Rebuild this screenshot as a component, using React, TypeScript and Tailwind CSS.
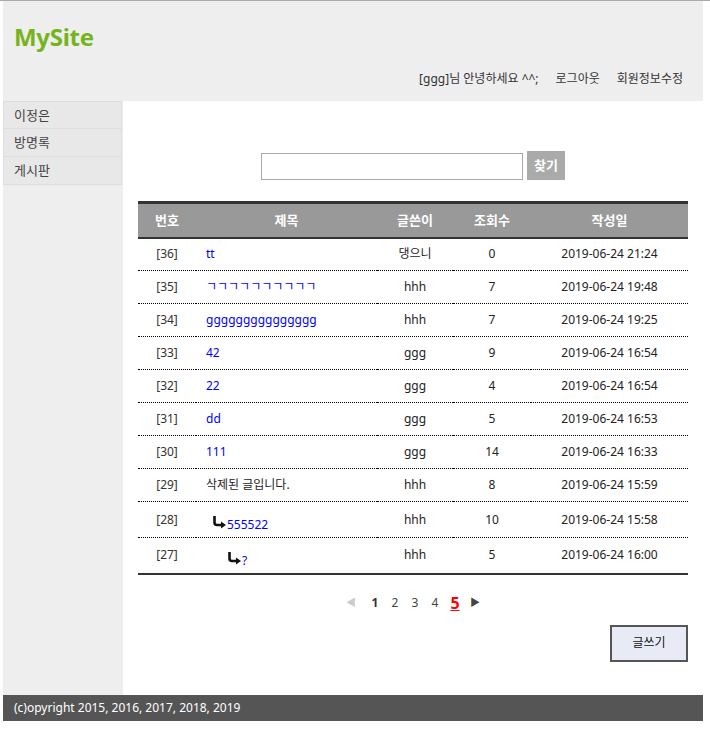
import React from 'react';

type Row = {
  no: number;
  title: string;
  depth: number;
  deleted?: boolean;
  writer: string;
  hit: number;
  date: string;
};

const rows: Row[] = [
  { no: 36, title: 'tt', depth: 0, writer: '댕으니', hit: 0, date: '2019-06-24 21:24' },
  { no: 35, title: 'ㄱㄱㄱㄱㄱㄱㄱㄱㄱㄱ', depth: 0, writer: 'hhh', hit: 7, date: '2019-06-24 19:48' },
  { no: 34, title: 'ggggggggggggggg', depth: 0, writer: 'hhh', hit: 7, date: '2019-06-24 19:25' },
  { no: 33, title: '42', depth: 0, writer: 'ggg', hit: 9, date: '2019-06-24 16:54' },
  { no: 32, title: '22', depth: 0, writer: 'ggg', hit: 4, date: '2019-06-24 16:54' },
  { no: 31, title: 'dd', depth: 0, writer: 'ggg', hit: 5, date: '2019-06-24 16:53' },
  { no: 30, title: '111', depth: 0, writer: 'ggg', hit: 14, date: '2019-06-24 16:33' },
  { no: 29, title: '삭제된 글입니다.', depth: 0, deleted: true, writer: 'hhh', hit: 8, date: '2019-06-24 15:59' },
  { no: 28, title: '555522', depth: 1, writer: 'hhh', hit: 10, date: '2019-06-24 15:58' },
  { no: 27, title: '?', depth: 2, writer: 'hhh', hit: 5, date: '2019-06-24 16:00' },
];

const ReplyArrow = () => (
  <svg width="15" height="14" viewBox="0 0 15 14" className="inline-block shrink-0">
    <path d="M2.5 1 V7.5 Q2.5 10 5 10 H10" fill="none" stroke="#111" strokeWidth="2.6" />
    <polygon points="9,6.5 14,10 9,13.5" fill="#111" />
  </svg>
);

const menus = ['이정은', '방명록', '게시판'];

export default function App() {
  return (
    <div className="min-h-[730px] bg-white border-t border-[#aaa] font-['Noto_Sans','Noto_Sans_CJK_KR',sans-serif] text-[12px] text-[#333]">
      <div className="ml-[3px] w-[700px]">
        {/* header */}
        <div className="h-[100px] bg-[#eeeeee] flex flex-col justify-between">
          <h1 className="pl-[11px] pt-[19px] text-[24px] leading-[34px] font-bold text-[#76b41d] tracking-[-0.3px]">MySite</h1>
          <div className="flex justify-end gap-[17px] pr-[20px] pb-[14px] leading-[16px] text-[12px] text-[#333]">
            <span>[ggg]님 안녕하세요 ^^;</span>
            <span>로그아웃</span>
            <span>회원정보수정</span>
          </div>
        </div>

        <div className="flex">
          {/* sidebar */}
          <div className="w-[120px] bg-[#eeeeee] shrink-0">
            <ul>
              {menus.map((m, i) => (
                <li
                  key={m}
                  className={`h-[28px] w-[119px] border border-[#dddddd] bg-[#e8e8e8] pl-[10px] text-[13px] leading-[26px] text-[#444] ${i > 0 ? 'border-t-0' : ''}`}
                >
                  {m}
                </li>
              ))}
            </ul>
          </div>

          {/* content */}
          <div className="flex-1 pl-[15px] pr-[15px] pt-[50px] pb-[33px]">
            <div className="flex items-end justify-center gap-[4px]">
              <input type="text" className="w-[262px] h-[27px] border border-[#aaa] bg-white outline-none" />
              <button className="w-[38px] h-[29px] bg-[#aaaaaa] text-white font-bold text-[13px]">찾기</button>
            </div>

            <table className="mt-[21px] w-[550px] table-fixed border-collapse">
              <colgroup>
                <col className="w-[58px]" />
                <col className="w-[181px]" />
                <col className="w-[76px]" />
                <col className="w-[78px]" />
                <col className="w-[157px]" />
              </colgroup>
              <thead>
                <tr className="h-[35px] bg-[#999999] border-t-[3px] border-b-[2px] border-[#333] text-white font-bold text-[13px]">
                  <th className="font-bold">번호</th>
                  <th className="font-bold">제목</th>
                  <th className="font-bold">글쓴이</th>
                  <th className="font-bold">조회수</th>
                  <th className="font-bold">작성일</th>
                </tr>
              </thead>
              <tbody>
                {rows.map((r, i) => (
                  <tr
                    key={r.no}
                    className={`${r.depth > 0 ? 'h-[36px]' : 'h-[33px]'} ${i === rows.length - 1 ? 'border-b-[2px] border-solid border-[#333]' : 'border-b border-dotted border-black'}`}
                  >
                    <td className="text-center text-[#333]">[{r.no}]</td>
                    <td className="pl-[10px] text-left">
                      {r.depth > 0 ? (
                        <span className="flex items-end pt-[6px]" style={{ paddingLeft: (r.depth - 1) * 15 + 6 }}>
                          <span className="mb-[3px]"><ReplyArrow /></span>
                          <span className="text-[#0000ff] leading-[16px]">{r.title}</span>
                        </span>
                      ) : r.deleted ? (
                        <span className="text-[#222]">{r.title}</span>
                      ) : (
                        <a className="text-[#0000ff]">{r.title}</a>
                      )}
                    </td>
                    <td className="text-center text-[#222]">{r.writer}</td>
                    <td className="text-center text-[#222]">{r.hit}</td>
                    <td className="text-center text-[#222]">{r.date}</td>
                  </tr>
                ))}
              </tbody>
            </table>

            {/* pager */}
            <div className="mt-[18px] flex items-center justify-center h-[20px] text-[12px]">
              <span className="w-[20px] text-center text-[#cccccc] text-[10px] mr-[4px]">◀</span>
              <span className="w-[20px] text-center text-[#333] font-bold">1</span>
              <span className="w-[20px] text-center text-[#444]">2</span>
              <span className="w-[20px] text-center text-[#444]">3</span>
              <span className="w-[20px] text-center text-[#444]">4</span>
              <span className="w-[20px] text-center text-[#ff0000] font-bold text-[16px] underline">5</span>
              <span className="w-[20px] text-center text-[#444] text-[10px]">▶</span>
            </div>

            <div className="mt-[12px] flex justify-end">
              <button className="w-[78px] h-[37px] border-2 border-[#555] bg-[#e8ebf6] text-[12px] text-[#111]">글쓰기</button>
            </div>
          </div>
        </div>

        {/* footer */}
        <div className="h-[26px] bg-[#555555] pl-[11px] text-white text-[12px] leading-[26px]">
          (c)opyright 2015, 2016, 2017, 2018, 2019
        </div>
      </div>
    </div>
  );
}
